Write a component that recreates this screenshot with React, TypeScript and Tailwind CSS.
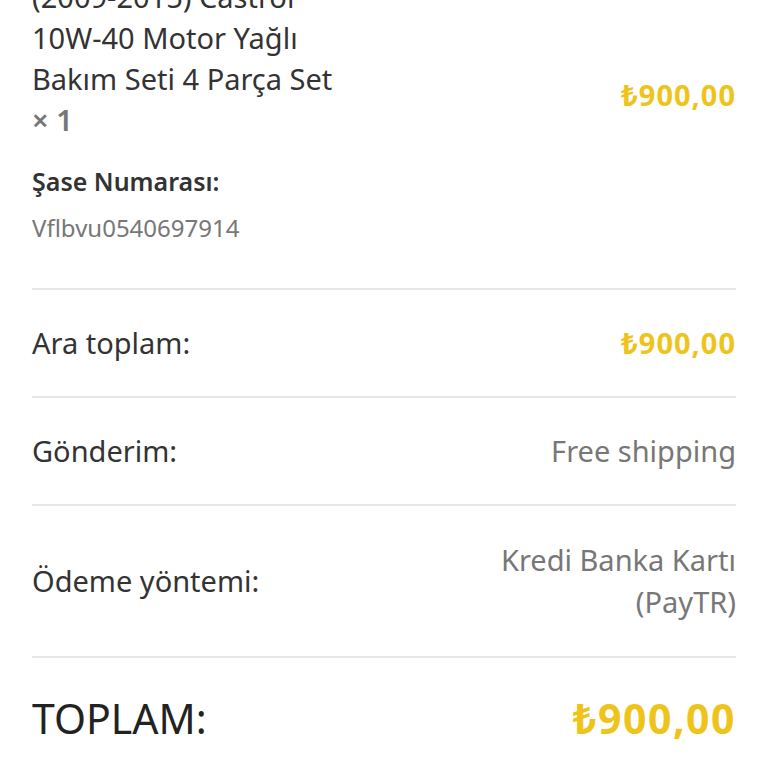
const font = { fontFamily: '"Noto Sans", "Open Sans", sans-serif' };

const Row = ({ label, children, big }: { label: string; children: React.ReactNode; big?: boolean }) => (
  <div className="flex items-center justify-between border-t-2 border-[#e6e6e6] py-[35px]">
    <div className={big ? "text-[41px] leading-[50px] text-[#222]" : "text-[29px] leading-[36px] text-[#333]"}>
      {label}
    </div>
    <div className="text-right">{children}</div>
  </div>
);

export default function App() {
  return (
    <div className="w-[768px] h-[768px] overflow-hidden bg-white" style={font}>
      <div className="px-8 -mt-[24px]">
        <div className="flex justify-between">
          <div className="w-[340px] text-[29px] leading-[41px] text-[#333]">
            <div>(2009-2015) Castrol</div>
            <div>10W-40 Motor Yağlı</div>
            <div>Bakım Seti 4 Parça Set</div>
            <div className="text-[#777] font-semibold">× 1</div>
          </div>
          <div className="mt-[101px] text-[29px] leading-[36px] font-bold tracking-[1px] text-[#eec41a]">₺900,00</div>
        </div>
        <div className="mt-[25px] text-[25px] font-semibold text-[#333] leading-[32px]">Şase Numarası:</div>
        <div className="mt-[16px] text-[24px] text-[#777] leading-[30px]">Vflbvu0540697914</div>
        <div className="mt-[45px]">
          <Row label="Ara toplam:">
            <span className="text-[29px] leading-[36px] font-bold tracking-[1px] text-[#eec41a]">₺900,00</span>
          </Row>
          <Row label="Gönderim:">
            <span className="text-[29px] leading-[36px] text-[#777]">Free shipping</span>
          </Row>
          <Row label="Ödeme yöntemi:">
            <div className="text-[29px] leading-[42px] text-[#777] -my-[2px]">
              <div>Kredi Banka Kartı</div>
              <div>(PayTR)</div>
            </div>
          </Row>
          <Row label="TOPLAM:" big>
            <span className="text-[41px] leading-[50px] font-bold tracking-[1.5px] text-[#eec41a]">₺900,00</span>
          </Row>
        </div>
      </div>
    </div>
  );
}
